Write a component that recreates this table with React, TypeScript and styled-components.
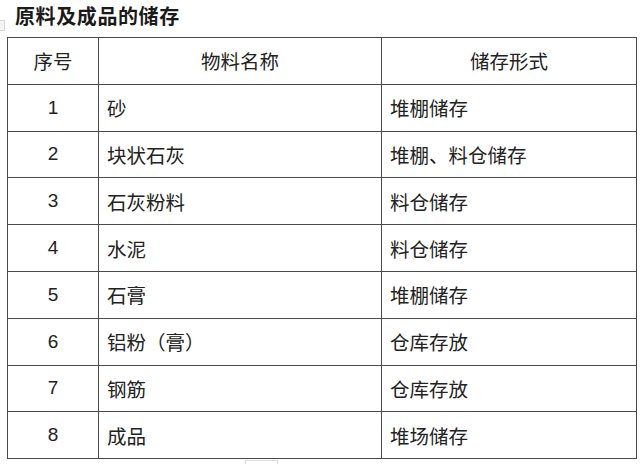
import React from "react";
import styled, { createGlobalStyle } from "styled-components";

const Global = createGlobalStyle`
  html, body { margin: 0; padding: 0; background: #fff; }
  body { font-family: "Noto Sans CJK SC", "Liberation Sans", sans-serif; color: #2a2a2a; }
`;

const Page = styled.div`
  width: 640px;
  height: 464px;
  overflow: hidden;
  display: flex;
  flex-direction: column;
  & > * { flex-shrink: 0; }
`;

const TitleBar = styled.div`
  height: 37px;
  display: flex;
  align-items: flex-start;
`;

const Anchor = styled.div`
  width: 5px;
  height: 11px;
  margin-top: 20px;
  border: 1px solid #d6d6d6;
  border-left: none;
  background: #f4f4f4;
  box-sizing: border-box;
`;

const Title = styled.h1`
  margin: 2px 0 0 10px;
  font-size: 20px;
  line-height: 28px;
  font-weight: 700;
  letter-spacing: 0.6px;
  color: #1a1a1a;
`;

const Table = styled.table`
  margin-left: 7px;
  width: 629px;
  border-collapse: collapse;
  table-layout: fixed;
`;

const Row = styled.tr`
  height: 46.8px;
`;

const Cell = styled.td<{ $align?: "left" | "center"; $num?: boolean }>`
  border: 1px solid #4a4a4a;
  padding: 0 0 0 ${(p) => (p.$align === "center" ? 0 : 8)}px;
  text-align: ${(p) => p.$align ?? "left"};
  vertical-align: middle;
  font-size: ${(p) => (p.$num ? 19 : 19.5)}px;
  font-family: ${(p) =>
    p.$num ? `"Liberation Sans", Arial, sans-serif` : `"Noto Sans CJK SC", sans-serif`};
  font-weight: 400;
  color: #222;
  white-space: nowrap;
`;

const Footer = styled.div`
  display: flex;
  padding-left: 245px;
  margin-top: 1px;
`;

const Tab = styled.div`
  width: 33px;
  height: 8px;
  border: 1px solid #dcdcdc;
  border-bottom: none;
  box-sizing: border-box;
`;

const rows: [string, string, string][] = [
  ["1", "砂", "堆棚储存"],
  ["2", "块状石灰", "堆棚、料仓储存"],
  ["3", "石灰粉料", "料仓储存"],
  ["4", "水泥", "料仓储存"],
  ["5", "石膏", "堆棚储存"],
  ["6", "铝粉（膏）", "仓库存放"],
  ["7", "钢筋", "仓库存放"],
  ["8", "成品", "堆场储存"],
];

export default function App() {
  return (
    <Page>
      <Global />
      <TitleBar>
        <Anchor />
        <Title>原料及成品的储存</Title>
      </TitleBar>
      <Table>
        <colgroup>
          <col style={{ width: 91 }} />
          <col style={{ width: 283 }} />
          <col style={{ width: 255 }} />
        </colgroup>
        <tbody>
          <Row>
            <Cell $align="center">序号</Cell>
            <Cell $align="center">物料名称</Cell>
            <Cell $align="center">储存形式</Cell>
          </Row>
          {rows.map(([n, name, form]) => (
            <Row key={n}>
              <Cell $align="center" $num>
                {n}
              </Cell>
              <Cell>{name}</Cell>
              <Cell>{form}</Cell>
            </Row>
          ))}
        </tbody>
      </Table>
      <Footer>
        <Tab />
      </Footer>
    </Page>
  );
}
